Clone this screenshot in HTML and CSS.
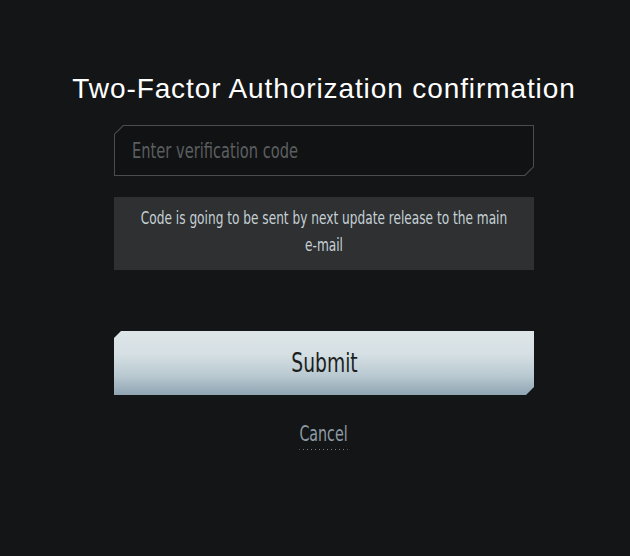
FILE: index.html
```html
<!DOCTYPE html>
<html lang="en">
<head>
<meta charset="utf-8">
<title>Two-Factor Authorization confirmation</title>
<link rel="stylesheet" href="styles.css">
</head>
<body>
<main class="panel">
  <h1 class="title">Two-Factor Authorization confirmation</h1>
  <div class="field">
    <div class="field-box">
      <input class="field-input" type="text" placeholder="Enter verification code">
    </div>
  </div>
  <div class="notice">
    <p class="notice-text">Code is going to be sent by next update release to the main e-mail</p>
  </div>
  <button class="submit" type="button"><span class="submit-label">Submit</span></button>
  <a class="cancel" href="#">Cancel</a>
</main>
</body>
</html>
```
FILE: styles.css
```css
html, body {
  margin: 0;
  padding: 0;
  background: #141516;
  height: 100%;
}
body {
  padding-left: 114px;
  padding-top: 71px;
  box-sizing: border-box;
}
.panel {
  width: 420px;
  display: flex;
  flex-direction: column;
  align-items: center;
}
.title {
  margin: 0;
  white-space: nowrap;
  font-family: "Liberation Sans", Arial, sans-serif;
  font-weight: normal;
  font-size: 28px;
  letter-spacing: 0.9px;
  line-height: 36px;
  color: #ffffff;
}
.field {
  margin-top: 18px;
  width: 420px;
  height: 51px;
  box-sizing: border-box;
  padding: 1px;
  background: #4b4d4d;
  clip-path: polygon(9px 0, 100% 0, 100% calc(100% - 9px), calc(100% - 9px) 100%, 0 100%, 0 9px);
}
.field-box {
  height: 100%;
  overflow: hidden;
  background: #111213;
  clip-path: polygon(8.6px 0, 100% 0, 100% calc(100% - 8.6px), calc(100% - 8.6px) 100%, 0 100%, 0 8.6px);
}
.field-input {
  display: block;
  width: 565px;
  height: 100%;
  box-sizing: border-box;
  border: 0;
  outline: none;
  background: transparent;
  padding: 0 0 0 23px;
  transform: scaleX(0.74);
  transform-origin: left center;
  font-family: "DejaVu Sans Condensed", "DejaVu Sans", sans-serif;
  font-size: 22px;
  color: #c5d0d6;
}
.field-input::placeholder {
  color: #5b5f60;
}
.notice {
  margin-top: 21px;
  width: 420px;
  height: 73px;
  box-sizing: border-box;
  padding-top: 8px;
  background: #2e3031;
  display: flex;
  justify-content: center;
}
.notice-text {
  flex: none;
  margin: 0;
  width: 470px;
  transform: scaleX(0.795);
  text-align: center;
  font-family: "DejaVu Sans Condensed", "DejaVu Sans", sans-serif;
  font-size: 17px;
  line-height: 27px;
  color: #c6d0d6;
}
.submit {
  margin-top: 61px;
  width: 420px;
  height: 64px;
  border: 0;
  padding: 0;
  cursor: pointer;
  background: linear-gradient(to bottom, #dde5e8 0%, #d6e0e4 35%, #b9c9d1 70%, #8fa5b2 100%);
  clip-path: polygon(7px 0, 100% 0, 100% calc(100% - 8px), calc(100% - 8px) 100%, 0 100%, 0 7px);
}
.submit-label {
  display: inline-block;
  transform: scaleX(0.8);
  font-family: "DejaVu Sans Condensed", "DejaVu Sans", sans-serif;
  font-size: 26px;
  color: #1c1e20;
}
.cancel {
  display: inline-block;
  margin-top: 27px;
  transform: scaleX(0.72);
  font-family: "DejaVu Sans Condensed", "DejaVu Sans", sans-serif;
  font-size: 22px;
  line-height: 24px;
  color: #8d9ba5;
  text-decoration: none;
  padding-bottom: 4px;
  background-image: repeating-linear-gradient(to right, #77838b 0, #77838b 1.4px, transparent 1.4px, transparent 5.5px);
  background-size: 100% 1px;
  background-position: 0 100%;
  background-repeat: no-repeat;
}
```
